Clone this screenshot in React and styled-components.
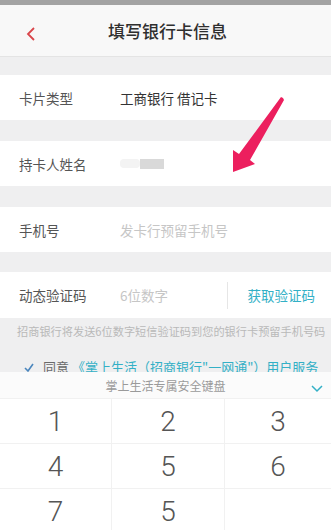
import React from 'react'
import styled, { createGlobalStyle } from 'styled-components'

const GlobalStyle = createGlobalStyle`
    body {
        margin: 0;
        font-family: "Noto Sans CJK SC", "Noto Sans", sans-serif;
    }
`
const Page = styled.div`
    position: relative;
    width: 331px;
    height: 530px;
    overflow: hidden;
    background: #efeff0;
`
const StatusStrip = styled.div`
    height: 5px;
    background: #a3a3a3;
`
const Header = styled.div`
    height: 51px;
    background: #f8f8f8;
    border-bottom: 1px solid #e4e4e4;
    display: flex;
    align-items: center;
    justify-content: center;
    position: relative;
`
const BackBtn = styled.div`
    position: absolute;
    left: 24px;
    top: 18px;
    width: 14px;
    height: 16px;
`
const Title = styled.h1`
    margin: 0 0 0 4px;
    font-size: 17px;
    font-weight: 500;
    color: #2f2f2f;
`
const Row = styled.div`
    margin-top: ${p => p.$gap}px;
    height: ${p => p.$h || 45}px;
    background: #fff;
    display: flex;
    align-items: center;
    padding-left: 19px;
`
const Label = styled.span`
    width: 101px;
    font-size: 13.5px;
    color: #555;
`
const Value = styled.span`
    flex: 1;
    font-size: 13.5px;
    color: ${p => (p.$placeholder ? '#c6c6c6' : '#333')};
`
const Blur = styled.div`
    display: flex;
    align-items: center;
`
const BlurLight = styled.span`
    width: 20px;
    height: 9px;
    background: #f3f3f3;
    border-radius: 4px;
`
const BlurDark = styled.span`
    width: 24px;
    height: 10px;
    background: #d9d9d9;
`
const Divider = styled.span`
    width: 1px;
    height: 27px;
    background: #e6e6e6;
    margin-right: 20px;
`
const CodeBtn = styled.span`
    font-size: 13.5px;
    color: #33b0c6;
    padding-right: 16px;
`
const Hint = styled.p`
    margin: 0;
    padding: 6px 0 0 17px;
    font-size: 11.2px;
    line-height: 14px;
    color: #b9b9b9;
    white-space: nowrap;
`
const Agree = styled.div`
    display: flex;
    align-items: center;
    padding: 21px 0 0 24px;
    font-size: 13px;
    line-height: 16px;
    white-space: nowrap;
`
const AgreeText = styled.span`
    color: #6a6a6a;
    margin: 0 3px 0 9px;
`
const AgreeLink = styled.span`
    color: #33b0c6;
`
const Keyboard = styled.div`
    position: absolute;
    left: 0;
    right: 0;
    top: 372px;
    background: #fff;
`
const KbHeader = styled.div`
    height: 26px;
    display: flex;
    align-items: center;
    justify-content: center;
    position: relative;
    background: #fbfbfb;
    font-size: 12px;
    color: #9a9a9a;
`
const KbClose = styled.div`
    position: absolute;
    right: 8px;
    top: 7px;
    width: 12px;
    height: 8px;
`
const Keys = styled.div`
    display: grid;
    grid-template-columns: 112px 113px 1fr;
    grid-auto-rows: 45px;
`
const Key = styled.div`
    display: flex;
    align-items: center;
    justify-content: center;
    font-family: Roboto, "Liberation Sans", sans-serif;
    font-weight: 300;
    font-size: 28px;
    color: #555;
    border-right: ${p => (p.$last ? 'none' : '1px solid #f1f1f1')};
    border-top: 1px solid #f1f1f1;
`
const Arrow = styled.svg`
    position: absolute;
    left: 226px;
    top: 94px;
`

const keys = ['1', '2', '3', '4', '5', '6', '7', '5', '']

function App() {
    return (
        <Page>
            <GlobalStyle />
            <StatusStrip />
            <Header>
                <BackBtn>
                    <svg width="14" height="16" viewBox="0 0 14 16">
                        <polyline points="10,2 4,8 10,14" fill="none" stroke="#d9454a" strokeWidth="1.8" />
                    </svg>
                </BackBtn>
                <Title>填写银行卡信息</Title>
            </Header>
            <Row $gap={18}>
                <Label>卡片类型</Label>
                <Value>工商银行 借记卡</Value>
            </Row>
            <Row $gap={21}>
                <Label>持卡人姓名</Label>
                <Blur><BlurLight /><BlurDark /></Blur>
            </Row>
            <Row $gap={21}>
                <Label>手机号</Label>
                <Value $placeholder>发卡行预留手机号</Value>
            </Row>
            <Row $gap={20} $h={46}>
                <Label>动态验证码</Label>
                <Value $placeholder>6位数字</Value>
                <Divider />
                <CodeBtn>获取验证码</CodeBtn>
            </Row>
            <Hint>招商银行将发送6位数字短信验证码到您的银行卡预留手机号码</Hint>
            <Agree>
                <svg width="10" height="9" viewBox="0 0 10 9">
                    <polyline points="1,5 4,8 9,1" fill="none" stroke="#4b86bd" strokeWidth="1.6" />
                </svg>
                <AgreeText>同意</AgreeText>
                <AgreeLink>《掌上生活（招商银行"一网通"）用户服务</AgreeLink>
            </Agree>
            <Arrow width="64" height="84" viewBox="0 0 64 84">
                <polygon points="57,4 58,6 24,66 29,70 7,78 7,56 13,60 55,3" fill="#ec1f5e" />
            </Arrow>
            <Keyboard>
                <KbHeader>
                    掌上生活专属安全键盘
                    <KbClose>
                        <svg width="12" height="8" viewBox="0 0 12 8">
                            <polyline points="1,1 6,6 11,1" fill="none" stroke="#33b0c6" strokeWidth="1.5" />
                        </svg>
                    </KbClose>
                </KbHeader>
                <Keys>
                    {keys.map((k, i) => (
                        <Key key={i} $last={i % 3 === 2}>{k}</Key>
                    ))}
                </Keys>
            </Keyboard>
        </Page>
    )
}

export default App
